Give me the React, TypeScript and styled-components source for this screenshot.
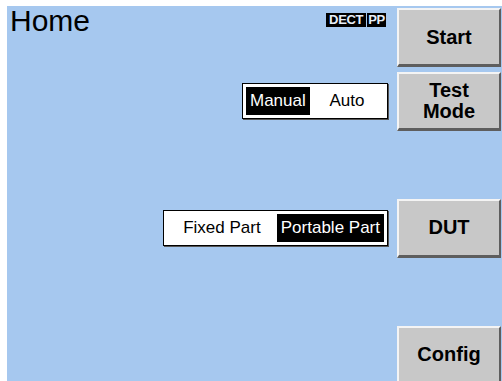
import React from 'react';
import styled, { createGlobalStyle } from 'styled-components';

const GlobalStyle = createGlobalStyle`
  html, body {
    margin: 0;
    padding: 0;
    background: #ffffff;
    overflow: hidden;
  }
  body {
    font-family: "Liberation Sans", Arial, sans-serif;
  }
`;

const Screen = styled.div`
  margin: 6px 0 0 7px;
  width: 495px;
  height: 375px;
  background-color: #a6c8ef;
  box-sizing: border-box;
  padding: 2px 1px 0 0;
  display: grid;
  grid-template-columns: 1fr 104px;
  grid-auto-rows: 59px;
  column-gap: 9px;
  row-gap: 4.6px;
`;

const Header = styled.div`
  display: flex;
  justify-content: space-between;
  align-items: flex-start;
  padding: 0 2px 0 3px;
`;

const Title = styled.h1`
  margin: 0;
  font-size: 30px;
  line-height: 26px;
  font-weight: normal;
  color: #000;
`;

const Badge = styled.div`
  margin-top: 5px;
  display: flex;
  gap: 1px;
`;

const BadgeCell = styled.span<{ pad: number }>`
  background: #000;
  color: #e6eef8;
  font-size: 13px;
  font-weight: bold;
  line-height: 14px;
  padding: 0 ${(p) => p.pad}px;
  letter-spacing: -0.3px;
`;

const Slot = styled.div`
  display: flex;
  align-items: center;
  justify-content: flex-end;
`;

const Toggle = styled.div<{ w: number }>`
  width: ${(p) => p.w}px;
  height: 36px;
  box-sizing: border-box;
  background: #fff;
  border: 1px solid #000;
  box-shadow: 1px 1px 0 #555;
  padding: 3px;
  display: flex;
`;

const Segment = styled.div<{ active?: boolean }>`
  display: flex;
  align-items: center;
  justify-content: center;
  font-size: 17px;
  color: ${(p) => (p.active ? '#fff' : '#000')};
  background: ${(p) => (p.active ? '#000' : 'transparent')};
  padding: 0 4px;
  flex: ${(p) => (p.active ? '0 0 auto' : '1 1 auto')};
  white-space: nowrap;
`;

const SoftKey = styled.button`
  width: 104px;
  height: 59px;
  box-sizing: border-box;
  margin: 0;
  padding: 0;
  background: #c8c8c8;
  border-top: 2px solid #f4f4f4;
  border-left: 2px solid #f4f4f4;
  border-right: 2px solid #5e5e5e;
  border-bottom: 3px solid #5e5e5e;
  font-family: "Liberation Sans", Arial, sans-serif;
  font-weight: bold;
  font-size: 20px;
  line-height: 21px;
  color: #000;
  grid-column: 2;
`;

const Empty = styled.div``;

const App: React.FC = () => {
  return (
    <>
      <GlobalStyle />
      <Screen>
        <Header>
          <Title>Home</Title>
          <Badge>
            <BadgeCell pad={3}>DECT</BadgeCell>
            <BadgeCell pad={1}>PP</BadgeCell>
          </Badge>
        </Header>
        <SoftKey>Start</SoftKey>

        <Slot>
          <Toggle w={146}>
            <Segment active>Manual</Segment>
            <Segment>Auto</Segment>
          </Toggle>
        </Slot>
        <SoftKey>Test<br />Mode</SoftKey>

        <Empty />
        <Empty />

        <Slot>
          <Toggle w={225}>
            <Segment>Fixed Part</Segment>
            <Segment active>Portable Part</Segment>
          </Toggle>
        </Slot>
        <SoftKey>DUT</SoftKey>

        <Empty />
        <Empty />

        <Empty />
        <SoftKey>Config</SoftKey>
      </Screen>
    </>
  );
};

export default App;
